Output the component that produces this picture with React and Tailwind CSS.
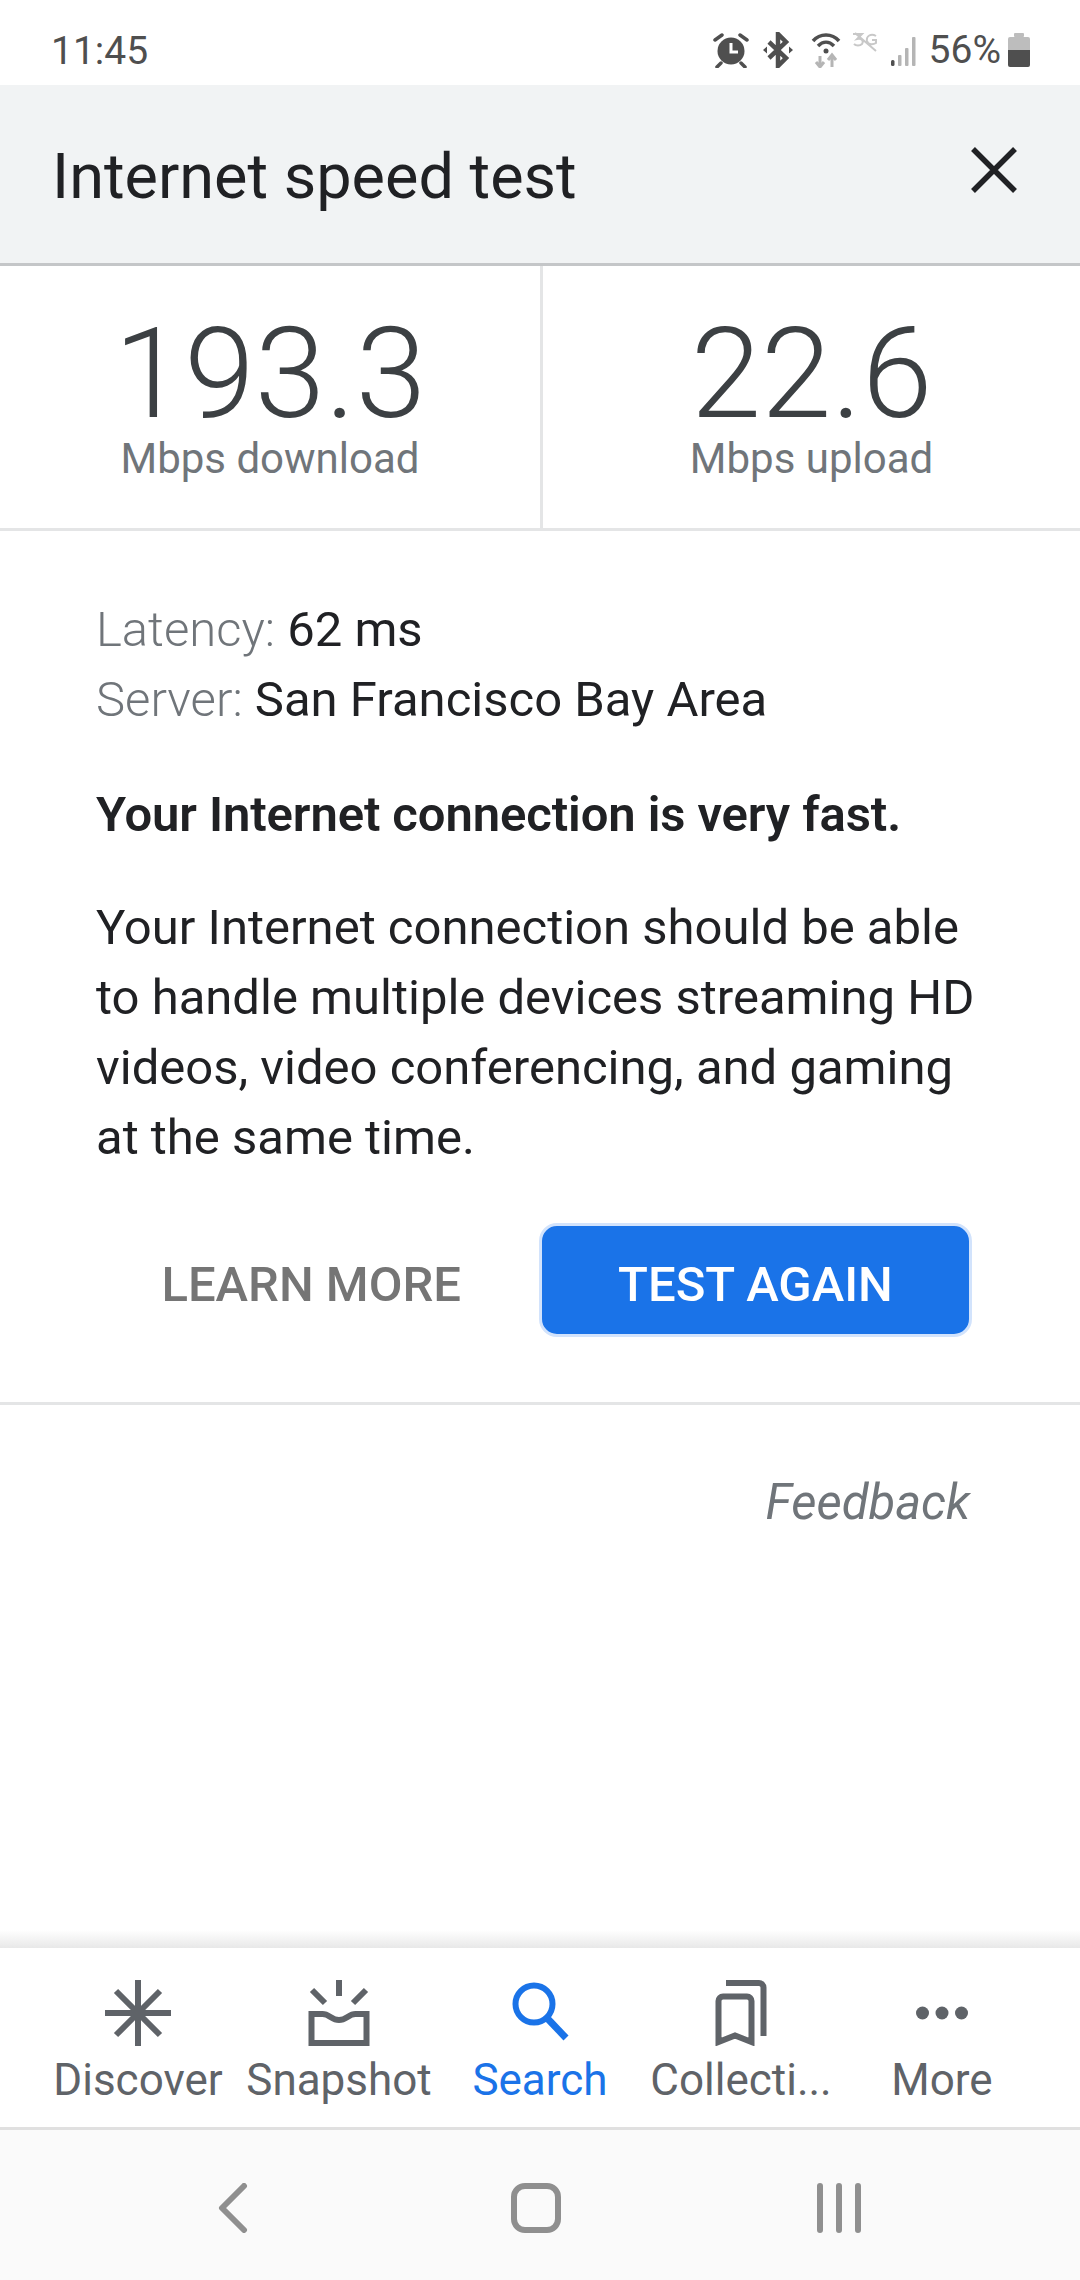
const font = { fontFamily: 'Roboto, sans-serif' };

function StatusIcons() {
  return (
    <div className="flex items-center">
      <svg width="36" height="36" viewBox="0 0 36 36" className="mr-[13px]">
        <circle cx="18" cy="19" r="13.5" fill="#4f4f4f" />
        <path d="M18 11v9h7" fill="none" stroke="#fff" strokeWidth="3" />
        <path d="M2 8l7-5M34 8l-7-5M8 31l-4 4M28 31l4 4" stroke="#4f4f4f" strokeWidth="3.5" strokeLinecap="round" />
      </svg>
      <svg width="32" height="36" viewBox="0 0 32 36" className="mr-[17px]">
        <path d="M7 10l17 16-8 8V2l8 8L7 26" fill="none" stroke="#4f4f4f" strokeWidth="4.5" />
        <path d="M1 18l4-3.5v7zM31 18l-4-3.5v7z" fill="#4f4f4f" />
      </svg>
      <svg width="30" height="36" viewBox="0 0 30 36" className="mr-[11px]">
        <path d="M2 9C9 1 21 1 28 9" fill="none" stroke="#4f4f4f" strokeWidth="3.5" />
        <path d="M7 14c5-5 11-5 16 0" fill="none" stroke="#4f4f4f" strokeWidth="3.5" />
        <circle cx="15" cy="19" r="2.5" fill="#4f4f4f" />
        <path d="M9 24v11M5 30l4 5 4-5M21 35V24M17 28l4-5 4 5" fill="none" stroke="#b5b5b5" strokeWidth="3" />
      </svg>
      <svg width="26" height="36" viewBox="0 0 26 36" className="self-start mt-[1px] mr-[13px]">
        <path d="M1 2h9l-5 5c5-1 7 2 5 5-2 2-6 2-8 0M24 4c-5-3-10 0-9 5 1 4 6 4 9 2V8h-4M3 1l21 18" fill="none" stroke="#c8c8c8" strokeWidth="2" />
      </svg>
      <svg width="28" height="30" viewBox="0 0 28 30" className="mr-[10px] mt-[1px]">
        <rect x="0" y="24" width="3.5" height="6" rx="1.5" fill="#4f4f4f" />
        <rect x="7" y="19" width="3.5" height="11" rx="1" fill="#b5b5b5" />
        <rect x="14" y="12" width="3.5" height="18" rx="1" fill="#b5b5b5" />
        <rect x="21" y="1" width="3.5" height="29" rx="1" fill="#b5b5b5" />
      </svg>
      <span className="text-[39px] text-[#4f4f4f] leading-none mr-[7px]">56%</span>
      <svg width="22" height="34" viewBox="0 0 22 34">
        <rect x="6" y="0" width="10" height="4" rx="1" fill="#bdbdbd" />
        <path d="M0 6a2 2 0 0 1 2-2h18a2 2 0 0 1 2 2v11H0z" fill="#bdbdbd" />
        <path d="M0 17h22v15a2 2 0 0 1-2 2H2a2 2 0 0 1-2-2z" fill="#4f4f4f" />
      </svg>
    </div>
  );
}

function NavIcon({ name, color }) {
  const c = color || '#5f6368';
  if (name === 'discover') return (
    <svg width="66" height="66" viewBox="0 0 66 66">
      <path d="M33 0v66M0 33h66M11 11l44 44M55 11L11 55" stroke={c} strokeWidth="6" />
    </svg>
  );
  if (name === 'snapshot') return (
    <svg width="66" height="66" viewBox="0 0 66 66">
      <path d="M33 0v16M6 10l13 13M60 10L47 23" stroke={c} strokeWidth="6" />
      <path d="M5.500 34h11c7 0 9 6 16.500 6s9.500-6 16.500-6h11v29h-55z" fill="none" stroke={c} strokeWidth="6" />
    </svg>
  );
  if (name === 'search') return (
    <svg width="66" height="66" viewBox="0 0 66 66">
      <circle cx="27" cy="24" r="18.500" fill="none" stroke={c} strokeWidth="6" />
      <path d="M40 38l19 20" stroke={c} strokeWidth="7" />
    </svg>
  );
  if (name === 'collections') return (
    <svg width="66" height="66" viewBox="0 0 66 66">
      <path d="M18 3h33a4.500 4.500 0 0 1 4.500 4.500V56" fill="none" stroke={c} strokeWidth="6" />
      <path d="M10.500 62V21a4.500 4.500 0 0 1 4.500-4.500h24a4.500 4.500 0 0 1 4.500 4.500v41L27 55.500z" fill="none" stroke={c} strokeWidth="6" />
    </svg>
  );
  return (
    <svg width="66" height="66" viewBox="0 0 66 66">
      <circle cx="13.500" cy="33" r="6.500" fill={c} />
      <circle cx="33" cy="33" r="6.500" fill={c} />
      <circle cx="52.500" cy="33" r="6.500" fill={c} />
    </svg>
  );
}

function NavItem({ name, label, active }) {
  return (
    <div className="w-[201px] flex flex-col items-center">
      <NavIcon name={name} color={active ? '#1a73e8' : undefined} />
      <span className={'text-[44px] leading-[48px] mt-[10px] whitespace-nowrap ' + (active ? 'text-[#1a73e8]' : 'text-[#5f6368]')}>{label}</span>
    </div>
  );
}

function Speed({ value, label, className }) {
  return (
    <div className={'flex flex-col items-center pt-[58px] ' + className}>
      <div className="text-[127px] font-light text-[#3c4043] leading-[100px]">{value}</div>
      <div className="text-[42px] text-[#70757a] leading-[48px] mt-[11px]">{label}</div>
    </div>
  );
}

export default function App() {
  return (
    <div className="w-[1080px] h-[2280px] bg-white flex flex-col overflow-hidden" style={font}>
      <div className="h-[85px] flex items-center justify-between pl-[51px] pr-[50px] pt-[15px]">
        <span className="text-[39px] text-[#4f4f4f] leading-none mt-[2px]">11:45</span>
        <StatusIcons />
      </div>

      <div className="h-[181px] bg-[#f1f3f4] border-b-[3px] border-[#c4c6c8] flex items-center justify-between pl-[52px] pr-[62px]">
        <h1 className="text-[63px] font-normal text-[#202124] leading-none mt-[4px]">Internet speed test</h1>
        <svg width="48" height="48" viewBox="0 0 48 48" className="mb-[8px]">
          <path d="M3 3l42 42M45 3L3 45" stroke="#202124" strokeWidth="5.500" />
        </svg>
      </div>

      <div className="h-[265px] flex border-b-[3px] border-[#e4e5e6]">
        <Speed value="193.3" label="Mbps download" className="w-[543px] border-r-[3px] border-[#e4e5e6]" />
        <Speed value="22.6" label="Mbps upload" className="flex-1" />
      </div>

      <div className="h-[874px] border-b-[3px] border-[#e4e5e6] pl-[96px] pr-[108px] pt-[64px] text-[49px] leading-[70px] text-[#202124]">
        <p><span className="font-light text-[#70757a]">Latency:</span> 62 ms</p>
        <p><span className="font-light text-[#70757a]">Server:</span> San Francisco Bay Area</p>
        <p className="font-semibold tracking-[-0.1px] mt-[45px]">Your Internet connection is very fast.</p>
        <p className="mt-[43px] whitespace-nowrap">Your Internet connection should be able<br />to handle multiple devices streaming HD<br />videos, video conferencing, and gaming<br />at the same time.</p>
        <div className="flex justify-end items-center mt-[50px]">
          <span className="text-[49px] font-medium text-[#757575] mr-[78px] pt-[10px]">LEARN MORE</span>
          <button className="w-[433px] h-[114px] rounded-[18px] bg-[#1a73e8] border-[3px] border-[#d2e3fc] text-white text-[49px] font-medium pt-[10px]">TEST AGAIN</button>
        </div>
      </div>

      <div className="flex-1 flex justify-end pr-[110px] pt-[71px] text-[49px] italic text-[#70757a] leading-[54px]">Feedback</div>

      <div className="h-[18px] bg-gradient-to-b from-white to-[#e8e8e8]" />
      <div className="h-[179px] flex items-start justify-center pt-[32px] px-[37px]">
        <NavItem name="discover" label="Discover" />
        <NavItem name="snapshot" label="Snapshot" />
        <NavItem name="search" label="Search" active />
        <NavItem name="collections" label="Collecti..." />
        <NavItem name="more" label="More" />
      </div>
      <div className="h-[153px] bg-[#fafafa] border-t-[3px] border-[#e0e0e0] flex items-center justify-center pt-[6px]">
        <svg width="30" height="50" viewBox="0 0 30 50" className="mr-[263px]">
          <path d="M26 3L4 25l22 22" fill="none" stroke="#8f8f8f" strokeWidth="6" strokeLinecap="round" strokeLinejoin="round" />
        </svg>
        <div className="w-[50px] h-[50px] rounded-[14px] border-[6px] border-[#8f8f8f] mr-[255px]" />
        <svg width="46" height="50" viewBox="0 0 46 50">
          <path d="M4 3v44M23 3v44M42 3v44" stroke="#8f8f8f" strokeWidth="6" strokeLinecap="round" />
        </svg>
      </div>
    </div>
  );
}
